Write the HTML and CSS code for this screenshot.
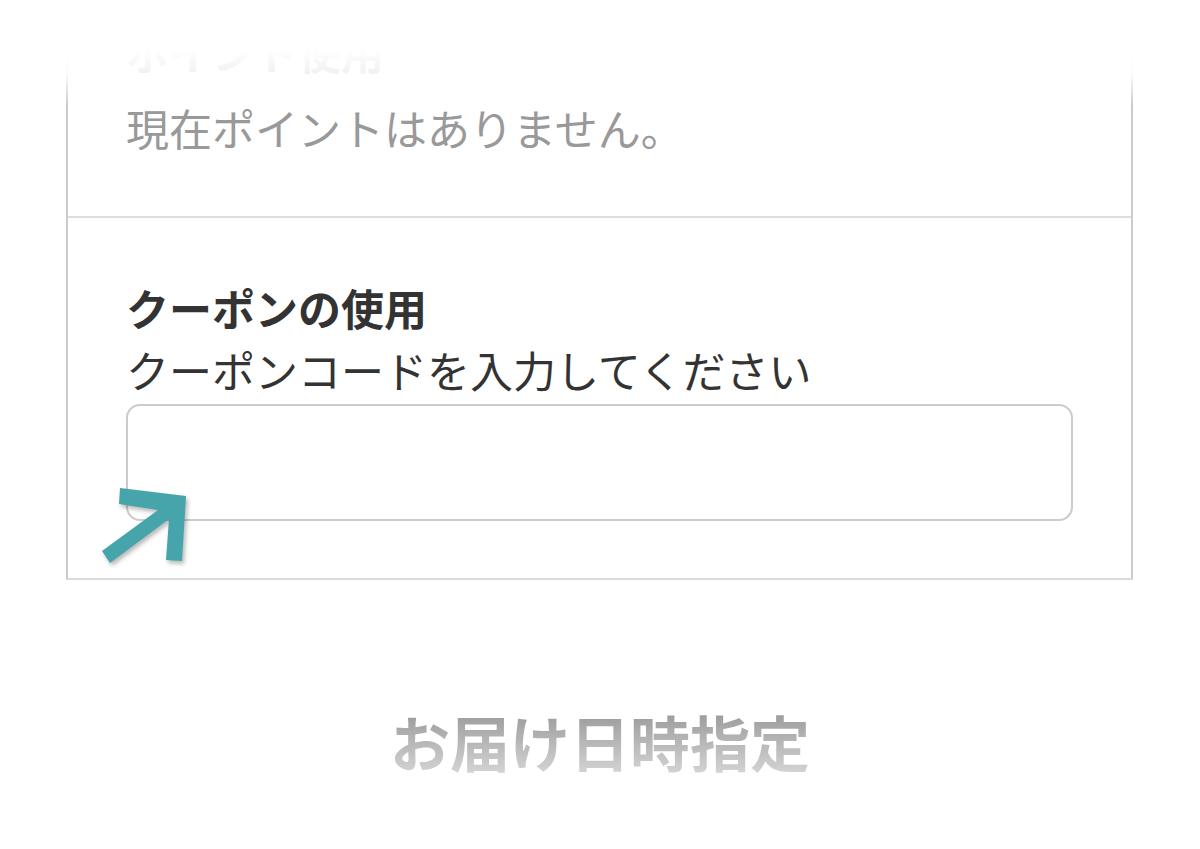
FILE: index.html
```html
<!DOCTYPE html>
<html lang="ja">
<head>
<meta charset="utf-8">
<link rel="stylesheet" href="styles.css">
</head>
<body>
<div class="page">
  <div class="card">
    <section class="section points">
      <h2 class="label">ポイント使用</h2>
      <p class="muted">現在ポイントはありません。</p>
    </section>
    <section class="section coupon">
      <h2 class="label">クーポンの使用</h2>
      <p class="text">クーポンコードを入力してください</p>
      <div class="input"></div>
    </section>
  </div>
  <h2 class="title">お届け日時指定</h2>
  <svg class="arrow" width="100" height="90" viewBox="95 480 100 90" aria-hidden="true">
    <polygon points="120,488 186,496 182,561 166,560 169,519 110,563 102,551 158,510 119,504" fill="#45a5aa"/>
  </svg>
  <div class="fade-top"></div>
  <div class="fade-bottom"></div>
</div>
</body>
</html>
```

FILE: styles.css
```css
html, body {
  margin: 0;
  padding: 0;
  background: #ffffff;
}
body {
  font-family: "Noto Sans CJK JP", "Noto Sans", sans-serif;
  color: #333333;
}
.page {
  position: relative;
  width: 1200px;
  height: 849px;
  overflow: hidden;
}
.card {
  box-sizing: border-box;
  margin-left: 66px;
  width: 1067px;
  border-left: 2px solid #cccccc;
  border-right: 2px solid #cccccc;
  border-bottom: 2px solid #dadada;
}
.section {
  padding: 0 58px;
}
.points {
  padding-top: 20px;
  padding-bottom: 58px;
  border-bottom: 2px solid #dddddd;
}
.coupon {
  padding-top: 58px;
  padding-bottom: 57px;
}
.label {
  margin: 0;
  font-size: 43px;
  line-height: 62px;
  font-weight: 700;
  color: #333333;
}
.points .label {
  margin-bottom: 14px;
}
.muted {
  margin: 0;
  font-size: 43px;
  line-height: 62px;
  color: #999999;
}
.text {
  margin: 0;
  font-size: 43px;
  line-height: 62px;
  color: #333333;
}
.input {
  box-sizing: border-box;
  margin-top: 4px;
  height: 117px;
  border: 2px solid #cccccc;
  border-radius: 14px;
  background: #ffffff;
}
.title {
  margin: 121px 0 0;
  text-align: center;
  font-size: 60px;
  line-height: 80px;
  font-weight: 700;
  color: #333333;
}
.arrow {
  position: absolute;
  left: 95px;
  top: 480px;
  filter: drop-shadow(2px 3px 2px rgba(0, 0, 0, 0.28));
}
.fade-top {
  position: absolute;
  left: 0;
  top: 0;
  width: 1200px;
  height: 105px;
  background: linear-gradient(to bottom, #ffffff 0, #ffffff 50px, rgba(255,255,255,0.93) 74px, rgba(255,255,255,0) 105px);
}
.fade-bottom {
  position: absolute;
  left: 0;
  top: 600px;
  width: 1200px;
  height: 249px;
  background: linear-gradient(to bottom, rgba(255,255,255,0) 0, #ffffff 220px, #ffffff 249px);
}
```
